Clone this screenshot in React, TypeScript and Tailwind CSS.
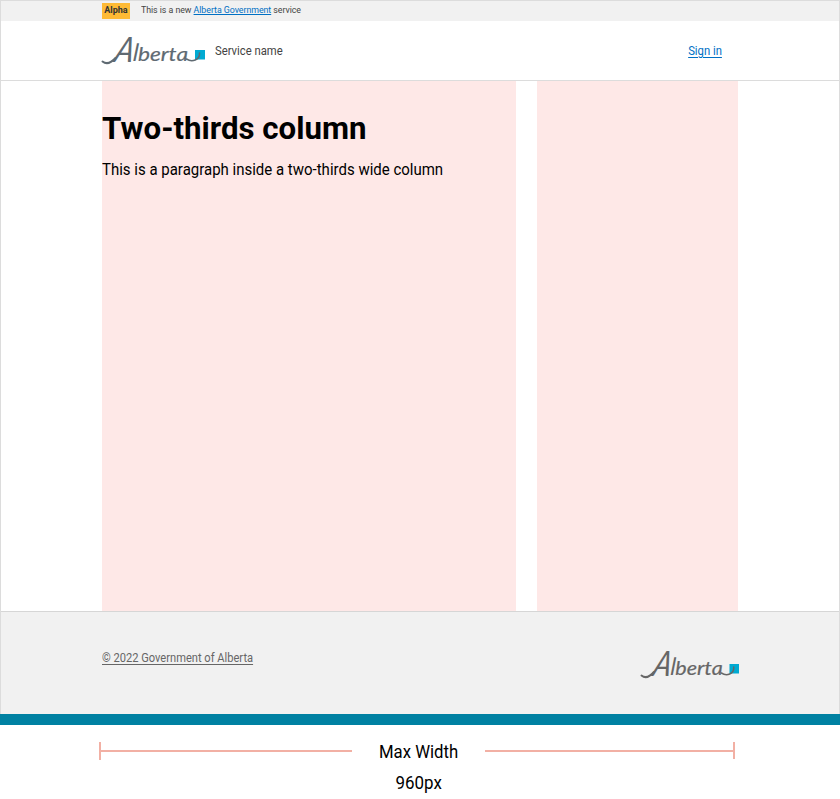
const font = "font-['Roboto','Liberation_Sans',sans-serif]";

function AlbertaLogo({ color, label, width }: { color: string; label: string; width: number }) {
  return (
    <svg width={width} height="31" viewBox="0 0 103 31" preserveAspectRatio="none" role="img" aria-label={label} className="block shrink-0 overflow-visible">
      <rect x="93" y="15" width="10" height="9.5" fill="#00aad2" />
      <g fill={color} fontFamily="Lato, sans-serif" fontStyle="italic">
        <text transform="translate(11 27) skewX(-14)" fontSize="35" textLength="19" lengthAdjust="spacingAndGlyphs">A</text>
        <text transform="translate(30.5 26) skewX(-5)" fontSize="24">l</text>
        <text x="36" y="26" fontSize="20" stroke={color} strokeWidth="0.2" textLength="50" lengthAdjust="spacingAndGlyphs">berta</text>
      </g>
      <g fill="none" stroke={color} strokeLinecap="round">
        <path d="M0.5 26.5C5 30 9 28 13.5 23" strokeWidth="2" />
        <path d="M84.5 24C90 27.5 98 25 97.5 18" strokeWidth="1.5" />
      </g>
    </svg>
  );
}

export default function App() {
  return (
    <div className={`h-[799px] w-[840px] overflow-hidden bg-white text-black ${font}`}>
      <div className="flex h-[725px] flex-col border-x border-[#dcdcdc]">
        <div className="flex h-[21px] shrink-0 items-center border-t border-[#dcdcdc] bg-[#f1f1f1] pl-[101px] text-[9px] text-[#444]">
          <span className="flex h-4 w-[28px] items-center justify-center bg-[#feba35] text-[9px] font-bold text-[#333]">Alpha</span>
          <span className="ml-[11px] origin-left scale-x-[0.98] whitespace-nowrap tracking-[-0.05px]">
            This is a new <a className="text-[#0070c4] underline">Alberta Government</a> service
          </span>
        </div>
        <header className="flex h-[60px] shrink-0 items-center border-b border-[#dcdcdc] pl-[101px] pr-[117px] text-[12px] text-[#444]">
          <AlbertaLogo color="#5f6a72" label="Alberta" width={103} />
          <span className="ml-[10px] origin-left scale-x-[0.94]">Service name</span>
          <a className="ml-auto origin-right scale-x-[0.94] text-[#0070c4] underline underline-offset-2">Sign in</a>
        </header>
        <main className="flex h-[530px] shrink-0 gap-[21px] pl-[101px] pr-[101px]">
          <section className="w-[414px] shrink-0 bg-[#fee8e7] pt-[27px]">
            <h1 className="origin-left scale-x-[0.976] whitespace-nowrap text-[32px] font-bold leading-[40px]">Two-thirds column</h1>
            <p className="mt-[10px] origin-left scale-x-[0.937] whitespace-nowrap text-[16px] leading-6">This is a paragraph inside a two-thirds wide column</p>
          </section>
          <aside className="w-[201px] shrink-0 bg-[#fee8e7]" />
        </main>
        <footer className="flex h-[103px] shrink-0 items-start justify-between border-t border-[#d6d6d6] bg-[#f1f1f1] pl-[101px] pr-[100px] text-[12px] text-[#666]">
          <a className="mt-[37px] origin-left scale-x-[0.926] underline underline-offset-2">© 2022 Government of Alberta</a>
          <div className="mt-[37px]"><AlbertaLogo color="#666666" label="Alberta" width={98} /></div>
        </footer>
        <div className="-mx-px h-[11px] shrink-0 bg-[#0081a2]" />
      </div>
      <div className="flex items-start pl-[99px] pt-[17px]">
        <div className="flex h-[18px] w-[253px] items-center">
          <div className="h-[18px] w-[2px] bg-[#f2b0a4]" />
          <div className="h-[2px] flex-1 bg-[#f2b0a4]" />
        </div>
        <div className="flex w-[133px] flex-col items-center text-[18px] leading-[31px]">
          <span className="-mt-[6px] scale-x-[0.93]">Max Width</span>
          <span className="scale-x-[0.94]">960px</span>
        </div>
        <div className="flex h-[17px] w-[250px] items-center">
          <div className="h-[2px] flex-1 bg-[#f2b0a4]" />
          <div className="h-[17px] w-[2px] bg-[#f2b0a4]" />
        </div>
      </div>
    </div>
  );
}
